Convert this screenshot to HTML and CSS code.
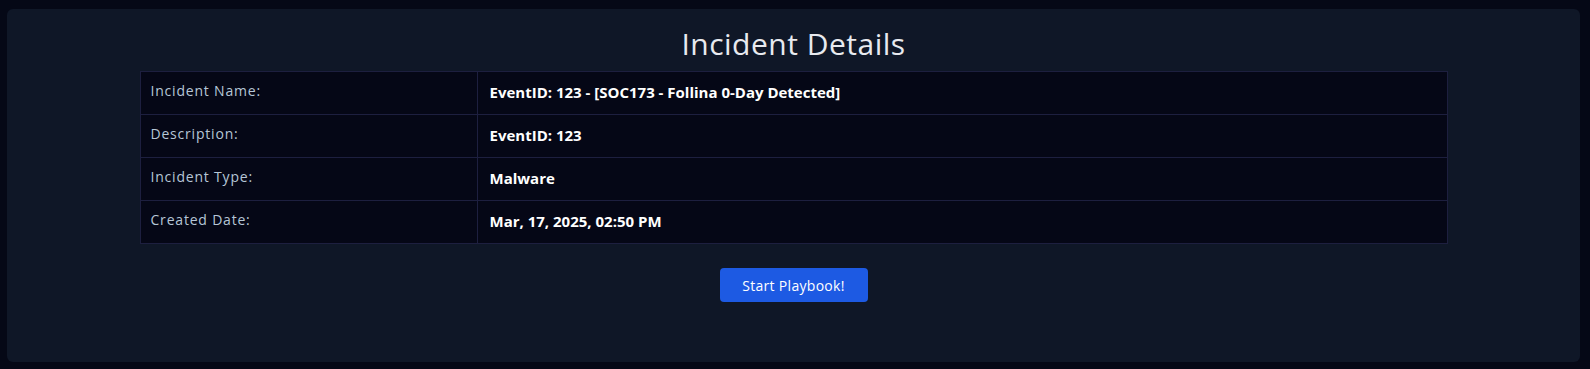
FILE: index.html
```html
<!DOCTYPE html>
<html lang="en">
<head>
<meta charset="utf-8">
<title>Incident Details</title>
<link rel="stylesheet" href="styles.css">
</head>
<body>
  <div class="page">
    <section class="card">
      <h1 class="title">Incident Details</h1>
      <table class="details">
        <colgroup>
          <col class="col-label">
          <col>
        </colgroup>
        <tbody>
          <tr>
            <td class="label">Incident Name:</td>
            <td class="value">EventID: 123 - [SOC173 - Follina 0-Day Detected]</td>
          </tr>
          <tr>
            <td class="label">Description:</td>
            <td class="value">EventID: 123</td>
          </tr>
          <tr>
            <td class="label">Incident Type:</td>
            <td class="value">Malware</td>
          </tr>
          <tr>
            <td class="label">Created Date:</td>
            <td class="value">Mar, 17, 2025, 02:50 PM</td>
          </tr>
        </tbody>
      </table>
      <div class="actions">
        <button class="btn-primary" type="button">Start Playbook!</button>
      </div>
    </section>
  </div>
</body>
</html>
```

FILE: styles.css
```css
html, body {
  margin: 0;
  padding: 0;
  background: #050816;
  font-family: "Open Sans", "Noto Sans", "Liberation Sans", sans-serif;
}

.page {
  padding: 9px 10px 0 7px;
}

.card {
  background: #0f1727;
  border-radius: 6px;
  padding: 17px 0 60px;
}

.title {
  margin: 0 0 9px;
  text-align: center;
  font-size: 30px;
  line-height: 36px;
  font-weight: 400;
  letter-spacing: 0.5px;
  color: #e8eaef;
}

.details {
  width: 1308px;
  margin: 0 auto;
  border-collapse: collapse;
  table-layout: fixed;
  background: #050716;
}

.col-label {
  width: 337px;
}

.details td {
  border: 1px solid #1d1f3f;
  height: 43px;
  box-sizing: border-box;
  padding: 0 12px;
  vertical-align: top;
}

.details td.label {
  padding-left: 10px;
}

.label {
  padding-top: 9px !important;
  font-size: 14px;
  line-height: 20px;
  font-weight: 400;
  letter-spacing: 0.8px;
  color: #b6c6d6;
}

.value {
  padding-top: 10px !important;
  font-size: 15px;
  line-height: 20px;
  font-weight: 700;
  color: #ffffff;
}

.actions {
  display: flex;
  justify-content: center;
  margin-top: 24px;
}

.btn-primary {
  width: 148px;
  height: 34px;
  border: 0;
  border-radius: 4px;
  background: #1d5ae3;
  color: #ffffff;
  font-family: inherit;
  font-size: 14px;
  font-weight: 400;
  letter-spacing: 0.3px;
  cursor: pointer;
}
```
